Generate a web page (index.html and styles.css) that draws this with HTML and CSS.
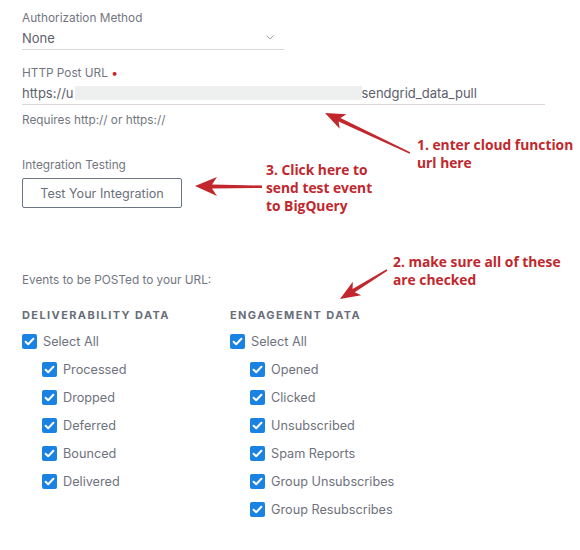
FILE: index.html
```html
<!DOCTYPE html>
<html>
<head>
<meta charset="utf-8">
<link rel="stylesheet" href="styles.css">
</head>
<body>
<div class="page">
  <div class="label">Authorization Method</div>
  <div class="select">
    <span>None</span>
    <svg class="chev" width="8" height="5" viewBox="0 0 8 5"><path d="M0.5 0.5 L4 4 L7.5 0.5" fill="none" stroke="#9aa0a8" stroke-width="1"/></svg>
  </div>

  <div class="label mt-url">HTTP Post URL <span class="req">•</span></div>
  <div class="input">https://u<span class="blur"></span>sendgrid_data_pull</div>
  <div class="help">Requires http:// or https://</div>

  <div class="label mt-int">Integration Testing</div>
  <button class="btn">Test Your Integration</button>

  <div class="label mt-events">Events to be POSTed to your URL:</div>

  <div class="cols">
    <div class="col col1">
      <div class="head">DELIVERABILITY DATA</div>
      <div class="row"><span class="cb"></span>Select All</div>
      <div class="row sub"><span class="cb"></span>Processed</div>
      <div class="row sub"><span class="cb"></span>Dropped</div>
      <div class="row sub"><span class="cb"></span>Deferred</div>
      <div class="row sub"><span class="cb"></span>Bounced</div>
      <div class="row sub"><span class="cb"></span>Delivered</div>
    </div>
    <div class="col">
      <div class="head">ENGAGEMENT DATA</div>
      <div class="row"><span class="cb"></span>Select All</div>
      <div class="row sub"><span class="cb"></span>Opened</div>
      <div class="row sub"><span class="cb"></span>Clicked</div>
      <div class="row sub"><span class="cb"></span>Unsubscribed</div>
      <div class="row sub"><span class="cb"></span>Spam Reports</div>
      <div class="row sub"><span class="cb"></span>Group Unsubscribes</div>
      <div class="row sub"><span class="cb"></span>Group Resubscribes</div>
    </div>
  </div>
</div>

<svg class="arrows" width="580" height="550" viewBox="0 0 580 550">
  <polygon points="195,186 217,177 212,184.5 262,185.5 262,188 212,188.5 217,196" fill="#c1272d"/>
  <polygon points="325,113 346.5,114.3 340.4,118 410.3,152.3 409.7,153.7 338.6,121.6 339.7,128.7" fill="#c1272d"/>
  <polygon points="340,299 352.8,281.7 352.6,288.9 386.6,269.3 387.4,270.7 354.7,292.3 361.2,295.3" fill="#c1272d"/>
</svg>

<div class="note note1">1. enter cloud function<br>url here</div>
<div class="note note3">3. Click here to<br>send test event<br>to BigQuery</div>
<div class="note note2">2. make sure all of these<br>are checked</div>
</body>
</html>
```
FILE: styles.css
```css
html, body {
  margin: 0;
  background: #ffffff;
}
body {
  position: relative;
  width: 580px;
  height: 550px;
  overflow: hidden;
  font-family: "Inter", "Noto Sans", sans-serif;
  color: #6e727d;
}
.page {
  padding: 10px 0 0 22px;
}
.label {
  font-size: 11.8px;
  line-height: 16px;
  color: #72767f;
}
.req {
  color: #d0212b;
  font-size: 12px;
}
.select {
  width: 262px;
  height: 23px;
  display: flex;
  align-items: center;
  justify-content: space-between;
  border-bottom: 1px solid #dcd6da;
  font-size: 13px;
  color: #5c616c;
}
.chev {
  margin-right: 10px;
}
.mt-url { margin-top: 15px; }
.input {
  width: 523px;
  height: 23px;
  display: flex;
  align-items: center;
  border-bottom: 1px solid #dcd6da;
  font-size: 13px;
  color: #5c616c;
}
.blur {
  display: inline-block;
  width: 287px;
  height: 14px;
  margin-left: 1px;
  background: #eef0f0;
}
.help {
  margin-top: 7px;
  font-size: 11.8px;
  line-height: 16px;
  color: #72767f;
}
.mt-int { margin-top: 29px; }
.btn {
  display: block;
  margin: 5px 0 0;
  width: 160px;
  height: 30px;
  padding: 0;
  background: #fff;
  border: 1px solid #6d7584;
  border-radius: 2px;
  font-family: "Inter", "Noto Sans", sans-serif;
  font-size: 12.6px;
  color: #6a707c;
}
.mt-events { margin-top: 64px; }
.cols {
  display: flex;
  margin-top: 19px;
}
.col1 { width: 208px; }
.head {
  font-size: 11px;
  line-height: 16px;
  font-weight: 700;
  letter-spacing: 1.4px;
  color: #696e79;
  margin-bottom: 4px;
}
.row {
  height: 28px;
  display: flex;
  align-items: center;
  font-size: 12.7px;
  color: #6e727d;
}
.row.sub { padding-left: 20px; }
.cb {
  width: 15px;
  height: 15px;
  margin-right: 6px;
  border-radius: 2px;
  background: #1a82e2 url("data:image/svg+xml;utf8,<svg xmlns='http://www.w3.org/2000/svg' width='15' height='15' viewBox='0 0 15 15'><path d='M3.6 7.8 L6.2 10.3 L11.4 4.8' fill='none' stroke='white' stroke-width='2' stroke-linecap='round' stroke-linejoin='round'/></svg>") center / 15px 15px no-repeat;
  flex: none;
}
.arrows {
  position: absolute;
  left: 0;
  top: 0;
  pointer-events: none;
}
.note {
  position: absolute;
  font-family: "Open Sans", sans-serif;
  font-weight: 700;
  font-size: 13.8px;
  line-height: 18px;
  color: #c1272d;
  white-space: nowrap;
}
.note1 { left: 417px; top: 136px; }
.note3 { left: 266px; top: 161px; }
.note2 { left: 393px; top: 253px; }
```
